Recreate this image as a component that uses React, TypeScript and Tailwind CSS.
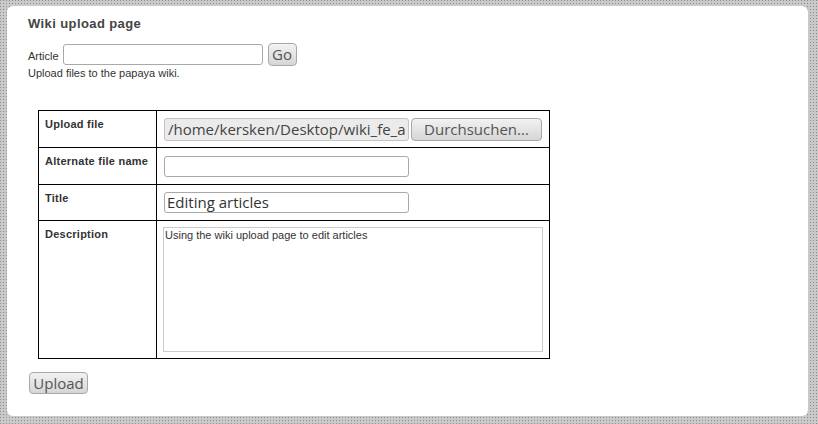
import React from "react";

const btn =
  "rounded-[4px] border border-[#a8a8a8] bg-[linear-gradient(#f2f2f2,#d6d6d6)] text-[#555] font-['Open_Sans','DejaVu_Sans',sans-serif] text-[14px] leading-none flex items-center justify-center";

const label =
  "border border-black align-top pt-[7px] pl-[6px] font-bold text-[#333] leading-[13px] tracking-[0.25px]";

export default function App() {
  return (
    <div className="w-[818px] h-[424px] bg-[#c9c9c9] bg-[image:conic-gradient(at_1px_1px,transparent_75%,#8c8c8c_0)] bg-[size:3px_3px] pt-[6px] pl-[7px] font-['Liberation_Sans',Arial,sans-serif]">
      <div className="w-[801px] h-[410px] bg-white rounded-[6px] pt-[10px] pl-[21px]">
        <h1 className="text-[13px] leading-[16px] font-bold text-[#444] tracking-[0.4px]">Wiki upload page</h1>
        <div className="mt-[11px] flex items-center h-[23px]">
          <span className="text-[11px] text-[#333] mr-[4px] mt-[4px]">Article</span>
          <div className="w-[200px] h-[21px] rounded-[3px] border border-[#a9a9a9] bg-white" />
          <div className={btn + " ml-[5px] w-[29px] h-[23px] text-[15px]"}>Go</div>
        </div>
        <p className="mt-[1px] text-[11px] leading-[13px] text-[#333]">Upload files to the papaya wiki.</p>

        <table className="mt-[30px] ml-[10px] w-[512px] border-collapse border border-black text-[11px]">
          <tbody>
            <tr className="h-[37px]">
              <td className={label + " w-[118px]"}>Upload file</td>
              <td className="border border-black align-top pt-[7px] pl-[7px]">
                <div className="flex items-center">
                  <div className="w-[245px] h-[23px] rounded-[3px] border border-[#c4c4c4] bg-[#ebebeb] overflow-hidden whitespace-nowrap pl-[3px] text-[15px] leading-[21px] text-[#444] font-['Open_Sans','DejaVu_Sans',sans-serif]">
                    /home/kersken/Desktop/wiki_fe_a
                  </div>
                  <div className={btn + " ml-[2px] w-[131px] h-[23px] text-[15px]"}>Durchsuchen...</div>
                </div>
              </td>
            </tr>
            <tr className="h-[37px]">
              <td className={label}>Alternate file name</td>
              <td className="border border-black align-top pt-[8px] pl-[7px]">
                <div className="w-[245px] h-[21px] rounded-[3px] border border-[#a9a9a9] bg-white" />
              </td>
            </tr>
            <tr className="h-[36px]">
              <td className={label}>Title</td>
              <td className="border border-black align-top pt-[7px] pl-[7px]">
                <div className="w-[245px] h-[21px] rounded-[3px] border border-[#a9a9a9] bg-white pl-[2px] text-[15px] leading-[19px] text-[#333] font-['Open_Sans','DejaVu_Sans',sans-serif] whitespace-nowrap">
                  Editing articles
                </div>
              </td>
            </tr>
            <tr className="h-[138px]">
              <td className={label}>Description</td>
              <td className="border border-black align-top pt-[6px] pl-[6px]">
                <div className="w-[380px] h-[125px] border border-[#cccccc] bg-white pl-[1px] pt-[1px] text-[11px] leading-[13px] text-[#333]">
                  Using the wiki upload page to edit articles
                </div>
              </td>
            </tr>
          </tbody>
        </table>

        <div className={btn + " mt-[13px] ml-[1px] w-[59px] h-[22px] text-[15px]"}>Upload</div>
      </div>
    </div>
  );
}
